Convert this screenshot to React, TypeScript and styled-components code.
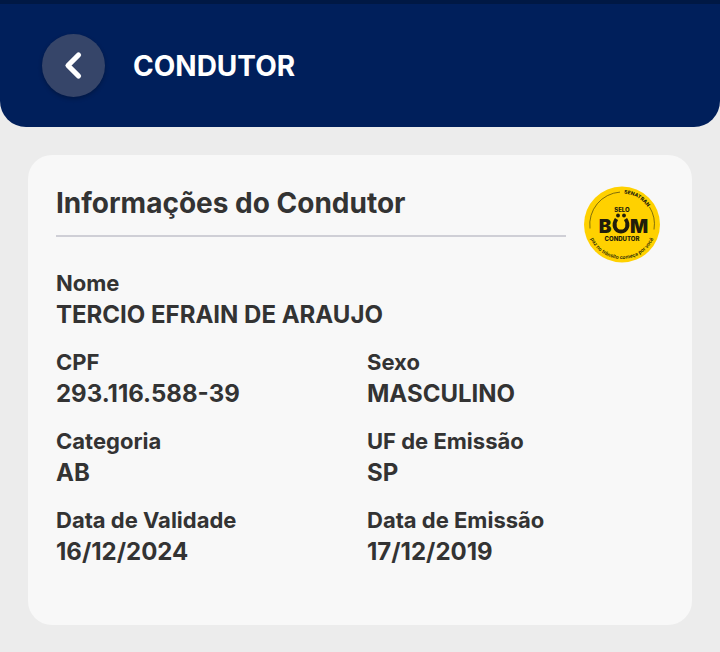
import React from "react";
import styled, { createGlobalStyle } from "styled-components";

const GlobalStyle = createGlobalStyle`
  * { box-sizing: border-box; }
  body {
    margin: 0;
    background: #ececec;
    color: #333333;
    font-family: Inter, "Liberation Sans", sans-serif;
    font-weight: 700;
  }
`;

const TopBar = styled.header`
  display: flex;
  align-items: center;
  gap: 28px;
  padding: 30px 42px;
  background: #001f5b;
  border-top: 4px solid #001844;
  border-radius: 0 0 26px 26px;
`;

const BackButton = styled.button`
  display: grid;
  place-items: center;
  width: 63px;
  height: 63px;
  padding: 0;
  border: 0;
  border-radius: 50%;
  background: #364569;
  box-shadow: 0 2px 4px rgba(0, 0, 0, 0.25);
  cursor: pointer;
`;

const PageTitle = styled.h1`
  margin: 0;
  color: #ffffff;
  font-size: 28px;
  line-height: 32px;
`;

const Content = styled.main`
  padding: 28px;
`;

const Card = styled.section`
  padding: 28px 28px 57px;
  border-radius: 24px;
  background: #f8f8f8;
`;

const CardHeader = styled.div`
  display: flex;
  align-items: flex-start;
  gap: 18px;
  padding-right: 4px;
`;

const CardTitle = styled.h2`
  flex: 1;
  margin: 0;
  padding: 3px 0 15px;
  border-bottom: 2px solid #cfcfd6;
  font-size: 28px;
  line-height: 34px;
`;

const Seal = styled.svg`
  flex: none;
  width: 76px;
  height: 77px;
  margin-top: 3px;
`;

const Fields = styled.dl`
  display: grid;
  grid-template-columns: 1fr 1fr;
  gap: 15px 14px;
  margin: 4px 0 0;
`;

const Field = styled.div<{ $wide?: boolean }>`
  grid-column: ${(p) => (p.$wide ? "1 / -1" : "auto")};
`;

const Label = styled.dt`
  font-size: 22px;
  line-height: 32px;
`;

const Value = styled.dd`
  margin: 0;
  font-size: 24px;
  line-height: 32px;
`;

const fields = [
  { label: "Nome", value: "TERCIO EFRAIN DE ARAUJO", wide: true },
  { label: "CPF", value: "293.116.588-39" },
  { label: "Sexo", value: "MASCULINO" },
  { label: "Categoria", value: "AB" },
  { label: "UF de Emissão", value: "SP" },
  { label: "Data de Validade", value: "16/12/2024" },
  { label: "Data de Emissão", value: "17/12/2019" },
];

function GoodDriverSeal() {
  return (
    <Seal viewBox="0 0 76 76" role="img" aria-label="Selo Bom Condutor">
      <defs>
        <path id="seal-top" d="M38 7A31 31 0 0 1 69 38" />
        <path id="seal-bottom" d="M3.500 38A34.500 34.500 0 0 0 72.500 38" />
      </defs>
      <circle cx="38" cy="38" r="38" fill="#ffd100" />
      <path d="M6 42A32.500 32.500 0 0 1 36 5.600M65.500 20.500A32.500 32.500 0 0 1 70 43" fill="none" stroke="#4b4310" strokeWidth="0.7" />
      <g fill="#211d0b" fontFamily="Inter, sans-serif" fontWeight="800" textAnchor="middle">
        <text fontSize="5"><textPath href="#seal-top" startOffset="33%">SENATRAN</textPath></text>
        <text fontSize="5" fontWeight="600"><textPath href="#seal-bottom" startOffset="50%">paz no trânsito começa por você</textPath></text>
        <text x="38" y="25" fontSize="6">SELO</text>
        <text x="21" y="46" fontSize="19" fontWeight="900">B</text>
        <text x="55" y="46" fontSize="19" fontWeight="900">M</text>
        <text x="38" y="54" fontSize="6">CONDUTOR</text>
      </g>
      <path d="M32.500 32.500C28.500 38 31 45 37 45S45.500 38 41.500 32.500" fill="none" stroke="#211d0b" strokeWidth="3.800" />
      <circle cx="34" cy="29" r="1.900" fill="#211d0b" />
      <circle cx="40" cy="29" r="1.900" fill="#211d0b" />
    </Seal>
  );
}

export default function App() {
  return (
    <>
      <GlobalStyle />
      <TopBar>
        <BackButton type="button" aria-label="Voltar">
          <svg width="32" height="32" viewBox="0 0 32 32" fill="none" stroke="#ffffff" strokeWidth="5.200" strokeLinecap="round" strokeLinejoin="round" aria-hidden="true">
            <path d="M20.500 5L10 15.500L20.500 26" />
          </svg>
        </BackButton>
        <PageTitle>CONDUTOR</PageTitle>
      </TopBar>
      <Content>
        <Card>
          <CardHeader>
            <CardTitle>Informações do Condutor</CardTitle>
            <GoodDriverSeal />
          </CardHeader>
          <Fields>
            {fields.map((f) => (
              <Field key={f.label} $wide={f.wide}>
                <Label>{f.label}</Label>
                <Value>{f.value}</Value>
              </Field>
            ))}
          </Fields>
        </Card>
      </Content>
    </>
  );
}
